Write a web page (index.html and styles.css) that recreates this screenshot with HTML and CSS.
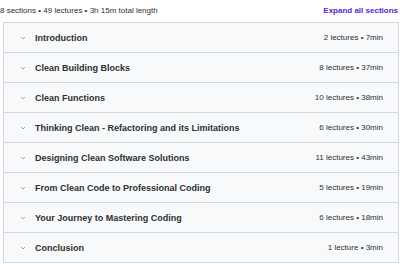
FILE: index.html
```html
<!DOCTYPE html>
<html lang="en">
<head>
    <meta charset="UTF-8">
    <title>Course content</title>
    <link rel="stylesheet" href="styles.css">
</head>
<body>
    <div class="curriculum">
        <div class="curriculum-head">
            <span class="summary">8 sections • 49 lectures • 3h 15m total length</span>
            <button class="expand-all">Expand all sections</button>
        </div>

        <div class="sections">
            <div class="section">
                <span class="chevron"><svg width="6" height="6" viewBox="0 0 6 6"><path d="M1 2l2 2 2-2" fill="none" stroke="#8a8f93" stroke-width="0.8"/></svg></span>
                <span class="section-title">Introduction</span>
                <span class="section-meta">2 lectures • 7min</span>
            </div>
            <div class="section">
                <span class="chevron"><svg width="6" height="6" viewBox="0 0 6 6"><path d="M1 2l2 2 2-2" fill="none" stroke="#8a8f93" stroke-width="0.8"/></svg></span>
                <span class="section-title">Clean Building Blocks</span>
                <span class="section-meta">8 lectures • 37min</span>
            </div>
            <div class="section">
                <span class="chevron"><svg width="6" height="6" viewBox="0 0 6 6"><path d="M1 2l2 2 2-2" fill="none" stroke="#8a8f93" stroke-width="0.8"/></svg></span>
                <span class="section-title">Clean Functions</span>
                <span class="section-meta">10 lectures • 38min</span>
            </div>
            <div class="section">
                <span class="chevron"><svg width="6" height="6" viewBox="0 0 6 6"><path d="M1 2l2 2 2-2" fill="none" stroke="#8a8f93" stroke-width="0.8"/></svg></span>
                <span class="section-title">Thinking Clean - Refactoring and its Limitations</span>
                <span class="section-meta">6 lectures • 30min</span>
            </div>
            <div class="section">
                <span class="chevron"><svg width="6" height="6" viewBox="0 0 6 6"><path d="M1 2l2 2 2-2" fill="none" stroke="#8a8f93" stroke-width="0.8"/></svg></span>
                <span class="section-title">Designing Clean Software Solutions</span>
                <span class="section-meta">11 lectures • 43min</span>
            </div>
            <div class="section">
                <span class="chevron"><svg width="6" height="6" viewBox="0 0 6 6"><path d="M1 2l2 2 2-2" fill="none" stroke="#8a8f93" stroke-width="0.8"/></svg></span>
                <span class="section-title">From Clean Code to Professional Coding</span>
                <span class="section-meta">5 lectures • 19min</span>
            </div>
            <div class="section">
                <span class="chevron"><svg width="6" height="6" viewBox="0 0 6 6"><path d="M1 2l2 2 2-2" fill="none" stroke="#8a8f93" stroke-width="0.8"/></svg></span>
                <span class="section-title">Your Journey to Mastering Coding</span>
                <span class="section-meta">6 lectures • 18min</span>
            </div>
            <div class="section">
                <span class="chevron"><svg width="6" height="6" viewBox="0 0 6 6"><path d="M1 2l2 2 2-2" fill="none" stroke="#8a8f93" stroke-width="0.8"/></svg></span>
                <span class="section-title">Conclusion</span>
                <span class="section-meta">1 lecture • 3min</span>
            </div>
        </div>
    </div>
</body>
</html>
```

FILE: styles.css
```css
body {
    margin: 0;
    background: #ffffff;
    font-family: "Liberation Sans", Arial, sans-serif;
    color: #2d2f31;
}

.curriculum {
    width: 396px;
    padding: 0 2px 0 3px;
}

.curriculum-head {
    display: flex;
    justify-content: space-between;
    align-items: center;
    height: 21px;
    padding-bottom: 1px;
    margin-left: -3px;
}

.summary {
    font-size: 8px;
    color: #2d2f31;
}

.expand-all {
    background: none;
    border: none;
    padding: 0;
    margin-right: 1px;
    font-family: inherit;
    font-size: 8px;
    font-weight: bold;
    color: #5624d0;
    cursor: pointer;
}

.sections {
    border: 1px solid #d1d7dc;
    border-bottom: none;
}

.section {
    display: flex;
    align-items: center;
    height: 29px;
    background: #f7f9fa;
    border-bottom: 1px solid #d1d7dc;
    padding: 0 15px 0 16px;
}

.chevron {
    display: flex;
    width: 6px;
    margin-right: 9px;
}

.section-title {
    flex: 1;
    font-size: 9px;
    font-weight: bold;
}

.section-meta {
    font-size: 8px;
    color: #2d2f31;
}
```
